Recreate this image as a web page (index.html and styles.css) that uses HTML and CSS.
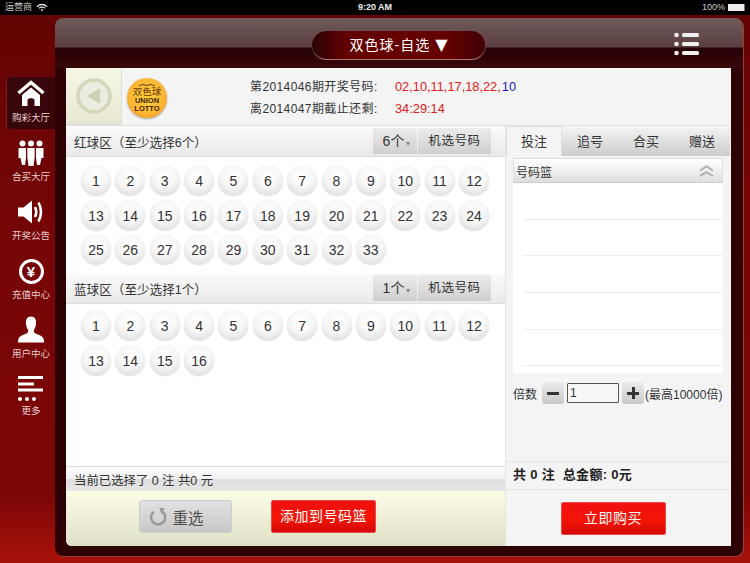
FILE: index.html
```html
<!DOCTYPE html>
<html>
<head>
    <title>双色球-自选</title>
    <link rel="stylesheet" href="styles.css">
</head>
<body>
    <div class="status-bar">
        <div class="status-left">
            <span>运营商</span>
            <svg class="wifi" viewBox="0 0 14 10" width="12" height="9">
                <path d="M1 4 Q7 -1 13 4" fill="none" stroke="#ddd" stroke-width="1.5"/>
                <path d="M3.5 6 Q7 3 10.500 6" fill="none" stroke="#ddd" stroke-width="1.5"/>
                <path d="M5.500 8 L7 6.500 L8.500 8 L7 9.500 Z" fill="#ddd"/>
            </svg>
        </div>
        <div class="status-time">9:20 AM</div>
        <div class="status-right">
            <span>100%</span>
            <span class="battery"></span>
        </div>
    </div>

    <div class="main">
        <div class="sidebar">
            <div class="nav-item active">
                <svg class="nav-icon" viewBox="0 0 28 28" width="28" height="28">
                    <path d="M1.500 13 L14 2.500 L26.500 13" fill="none" stroke="#fff" stroke-width="3.400"/>
                    <path d="M5 15 L14 7.500 L23 15 V26 H17.500 V19.500 Q14 16.500 10.500 19.500 V26 H5 Z" fill="#fff"/>
                </svg>
                <div class="nav-label">购彩大厅</div>
            </div>
            <div class="nav-item">
                <svg class="nav-icon" viewBox="0 0 28 28" width="28" height="28">
                    <circle cx="5.500" cy="4.500" r="3" fill="#fff"/>
                    <circle cx="14" cy="4.500" r="3" fill="#fff"/>
                    <circle cx="22.500" cy="4.500" r="3" fill="#fff"/>
                    <path d="M1.500 9 H9 V19 L8 26 H5 L3.500 19 H1.500 Z" fill="#fff"/>
                    <path d="M10.300 9 H17.700 V18 L16.500 27 H11.500 L10.300 18 Z" fill="#fff"/>
                    <path d="M19 9 H26.500 V19 H24.500 L23 26 H20 L19 19 Z" fill="#fff"/>
                </svg>
                <div class="nav-label">合买大厅</div>
            </div>
            <div class="nav-item">
                <svg class="nav-icon" viewBox="0 0 28 28" width="28" height="28">
                    <path d="M1 9.500 H6.500 L15 2.500 V25.500 L6.500 18.500 H1 Z" fill="#fff"/>
                    <path d="M18 9 Q20.500 14 18 19" fill="none" stroke="#fff" stroke-width="2.600"/>
                    <path d="M21.500 4.500 Q26.500 14 21.500 23.500" fill="none" stroke="#fff" stroke-width="2.600"/>
                </svg>
                <div class="nav-label">开奖公告</div>
            </div>
            <div class="nav-item">
                <div class="nav-icon yen-box"><span class="yen">¥</span></div>
                <div class="nav-label">充值中心</div>
            </div>
            <div class="nav-item">
                <svg class="nav-icon" viewBox="0 0 28 28" width="28" height="28">
                    <path d="M14 0.500 C18 0.500 19.500 3.500 19 8 C18.700 11 17.500 13 16.800 14.500 C16.500 16.500 18 17.500 21 18.500 C24.500 19.800 26.500 21 27 24.500 V26.500 H1 V24.500 C1.500 21 3.500 19.800 7 18.500 C10 17.500 11.500 16.500 11.200 14.500 C10.500 13 9.300 11 9 8 C8.500 3.500 10 0.500 14 0.500 Z" fill="#fff"/>
                </svg>
                <div class="nav-label">用户中心</div>
            </div>
            <div class="nav-item">
                <svg class="nav-icon" viewBox="0 0 28 28" width="28" height="28">
                    <rect x="1" y="1" width="25" height="3" fill="#fff"/>
                    <rect x="1" y="7.500" width="16" height="3" fill="#fff"/>
                    <rect x="1" y="13.500" width="25" height="3" fill="#fff"/>
                    <circle cx="3" cy="24" r="2" fill="#fff"/>
                    <circle cx="10" cy="24" r="2" fill="#fff"/>
                    <circle cx="17" cy="24" r="2" fill="#fff"/>
                </svg>
                <div class="nav-label">更多</div>
            </div>
        </div>

        <div class="frame">
            <div class="frame-header">
                <div class="title-pill">双色球-自选 <span class="title-arrow">▼</span></div>
                <svg class="menu-icon" viewBox="0 0 26 24" width="26" height="24">
                    <circle cx="2.500" cy="3" r="2.300" fill="#eee"/>
                    <circle cx="2.500" cy="12" r="2.300" fill="#eee"/>
                    <circle cx="2.500" cy="21" r="2.300" fill="#eee"/>
                    <rect x="8" y="1" width="17" height="4" rx="1.500" fill="#eee"/>
                    <rect x="8" y="10" width="17" height="4" rx="1.500" fill="#eee"/>
                    <rect x="8" y="19" width="17" height="4" rx="1.500" fill="#eee"/>
                </svg>
            </div>

            <div class="panel">
                <div class="info-row">
                    <div class="back-box">
                        <svg viewBox="0 0 36 36" width="36" height="36">
                            <circle cx="18" cy="18" r="16" fill="#ecece0" stroke="#d6d6ba" stroke-width="3.500"/>
                            <path d="M11 18 L24 10 V26 Z" fill="#cfcfb2"/>
                        </svg>
                    </div>
                    <div class="logo">
                        <svg class="logo-mark" viewBox="0 0 16 4" width="16" height="4">
                            <path d="M0 3 Q4 0 8 2.500 Q12 0 16 3" fill="none" stroke="#6a3a05" stroke-width="1"/>
                        </svg>
                        <span class="logo-cn">双色球</span>
                        <span class="logo-en">UNION</span>
                        <span class="logo-en">LOTTO</span>
                    </div>
                    <div class="draw-info">
                        <div class="draw-line">
                            <span class="draw-name">第2014046期开奖号码:</span>
                            <span class="red">02,10,11,17,18,22,<span class="blue">10</span></span>
                        </div>
                        <div class="draw-line">
                            <span class="draw-name">离2014047期截止还剩:</span>
                            <span class="red">34:29:14</span>
                        </div>
                    </div>
                </div>

                <div class="content">
                    <div class="left-col">
                        <div class="zone-header">
                            <span class="zone-title">红球区（至少选择6个）</span>
                            <div class="picker">
                                <div class="picker-count">6个<span class="caret">▾</span></div>
                                <div class="picker-btn">机选号码</div>
                            </div>
                        </div>
                        <div class="balls red-balls" id="redBalls"></div>

                        <div class="zone-header">
                            <span class="zone-title">蓝球区（至少选择1个）</span>
                            <div class="picker">
                                <div class="picker-count">1个<span class="caret">▾</span></div>
                                <div class="picker-btn">机选号码</div>
                            </div>
                        </div>
                        <div class="balls blue-balls" id="blueBalls"></div>

                        <div class="selected-bar">当前已选择了 0 注 共0 元</div>
                        <div class="action-bar">
                            <div class="reset-btn">
                                <svg viewBox="0 0 20 20" width="19" height="19">
                                    <path d="M13.500 4.500 A7.500 7.500 0 1 1 5 5" fill="none" stroke="#999" stroke-width="2.600"/>
                                    <path d="M11 0.500 L16.500 1.500 L13 7 Z" fill="#999"/>
                                </svg>
                                <span>重选</span>
                            </div>
                            <div class="red-btn add-btn">添加到号码篮</div>
                        </div>
                    </div>

                    <div class="right-col">
                        <div class="tabs">
                            <div class="tab active">投注</div>
                            <div class="tab">追号</div>
                            <div class="tab">合买</div>
                            <div class="tab">赠送</div>
                        </div>

                        <div class="basket">
                            <div class="basket-header">
                                <span>号码篮</span>
                                <svg viewBox="0 0 16 14" width="15" height="13">
                                    <path d="M1 6 L8 1.500 L15 6" fill="none" stroke="#b4b4b4" stroke-width="2.400"/>
                                    <path d="M1 12 L8 7.500 L15 12" fill="none" stroke="#b4b4b4" stroke-width="2.400"/>
                                </svg>
                            </div>
                            <div class="basket-rows">
                                <div class="basket-row"></div>
                                <div class="basket-row"></div>
                                <div class="basket-row"></div>
                                <div class="basket-row"></div>
                                <div class="basket-row"></div>
                            </div>
                        </div>

                        <div class="times-row">
                            <span>倍数</span>
                            <div class="step-btn minus-btn"><span class="minus"></span></div>
                            <input class="times-input" type="text" value="1">
                            <div class="step-btn plus-btn"><span class="minus"></span><span class="plus-bar"></span></div>
                            <span>(最高10000倍)</span>
                        </div>

                        <div class="spacer"></div>

                        <div class="summary">共 0 注&nbsp; 总金额: 0元</div>
                        <div class="buy-row">
                            <div class="red-btn buy-btn">立即购买</div>
                        </div>
                    </div>
                </div>
            </div>
        </div>
    </div>

    <script>
        function fillBalls(id, count) {
            const box = document.getElementById(id);
            for (let i = 1; i <= count; i++) {
                const ball = document.createElement('div');
                ball.className = 'ball';
                ball.textContent = i;
                box.appendChild(ball);
            }
        }

        fillBalls('redBalls', 33);
        fillBalls('blueBalls', 16);
    </script>
</body>
</html>
```

FILE: styles.css
```css
* { box-sizing: border-box; }
html, body { margin: 0; padding: 0; }
body {
    width: 750px;
    height: 563px;
    overflow: hidden;
    font-family: "Liberation Sans", "Noto Sans CJK SC", sans-serif;
    font-size: 12px;
    color: #333;
    background: linear-gradient(#620303, #760505 40%, #7c0606 88%, #a5120a 99%);
    display: flex;
    flex-direction: column;
}

/* status bar */
.status-bar {
    height: 15px;
    background: #000;
    color: #ccc;
    font-size: 9px;
    line-height: 15px;
    display: flex;
    padding: 0 5px;
}
.status-left, .status-right { flex: 1; display: flex; align-items: center; gap: 4px; }
.status-right { justify-content: flex-end; gap: 3px; }
.status-time { color: #eee; font-weight: bold; font-size: 9px; }
.battery {
    width: 17px;
    height: 7px;
    background: #eee;
    border-right: 1px solid #777;
}

.main { flex: 1; display: flex; }

/* sidebar */
.sidebar {
    width: 55px;
    padding: 62px 0 0 7px;
    display: flex;
    flex-direction: column;
    gap: 7px;
}
.nav-item {
    height: 52px;
    width: 48px;
    padding-top: 3px;
    display: flex;
    flex-direction: column;
    align-items: center;
    color: #e6d0d0;
}
.nav-item.active {
    background: #38050a;
    border-radius: 4px 0 0 4px;
    box-shadow: -1px 0 1px rgba(255, 255, 255, .12);
}
.nav-icon { width: 28px; height: 28px; display: block; }
.nav-label { margin-top: 3px; font-size: 9.500px; line-height: 13px; white-space: nowrap; }
.nav-item:last-child .nav-label { margin-top: 1px; }
.yen-box { display: flex; align-items: center; justify-content: center; }
.yen {
    width: 25px;
    height: 25px;
    border: 3px solid #fff;
    border-radius: 50%;
    color: #fff;
    font-weight: bold;
    font-size: 15px;
    line-height: 19px;
    text-align: center;
}

/* frame */
.frame {
    width: 688px;
    height: 538px;
    margin-top: 3px;
    background: #2e0204;
    border-radius: 8px;
    box-shadow: 1px 1px 0 #a03a3a;
    padding-bottom: 10px;
    display: flex;
    flex-direction: column;
}
.frame-header {
    height: 50px;
    flex: none;
    position: relative;
    display: flex;
    align-items: center;
    justify-content: center;
    padding-top: 3px;
    border-radius: 8px 8px 0 0;
    background: linear-gradient(#6f5a5a, #5c3f40 58%, #250205 60%, #3a0609);
}
.title-pill {
    width: 174px;
    height: 29px;
    margin-top: 1px;
    border-radius: 15px;
    border-bottom: 1px solid #b07878;
    border-right: 1px solid #7a3a3a;
    background: linear-gradient(90deg, #2a0205, #640000 20%, #640000 80%, #3c0205);
    color: #fff;
    font-size: 14px;
    letter-spacing: 1px;
    line-height: 28px;
    text-align: center;
    white-space: nowrap;
}
.title-arrow { font-family: "DejaVu Sans", sans-serif; font-size: 16px; letter-spacing: 0; }
.menu-icon { position: absolute; right: 43px; top: 14px; }

/* white panel */
.panel {
    flex: 1;
    margin: 0 12px 0 11px;
    background: #f4f4f4;
    border-radius: 0 0 0 6px;
    overflow: hidden;
    display: flex;
    flex-direction: column;
}
.info-row {
    height: 58px;
    flex: none;
    display: flex;
    align-items: center;
    border-bottom: 1px solid #e0e0e0;
}
.back-box {
    width: 56px;
    height: 57px;
    background: linear-gradient(#f6f6e6, #e8e8d2);
    border-right: 1px solid #ddd;
    border-bottom: 1px solid #ddd;
    display: flex;
    align-items: center;
    justify-content: center;
}
.logo {
    width: 40px;
    height: 40px;
    margin: 2px 0 0 5px;
    border-radius: 50%;
    background: radial-gradient(circle at 50% 45%, #ffcf3a, #fab533 60%, #ea8418);
    box-shadow: 0 1px 2px rgba(0, 0, 0, .35);
    color: #6a3a05;
    display: flex;
    flex-direction: column;
    align-items: center;
    justify-content: center;
    overflow: hidden;
}
.logo-mark { display: block; flex: none; }
.logo-cn { font-size: 9.500px; line-height: 10px; }
.logo-en { font-size: 7.500px; line-height: 7.500px; font-weight: bold; color: #3c2205; }
.draw-info { margin-left: 83px; margin-top: 2px; }
.draw-line { display: flex; line-height: 22px; }
.draw-name { width: 145px; font-size: 12px; letter-spacing: .4px; }
.red { color: #e02020; font-size: 12.800px; }
.blue { color: #1a1ac8; margin-left: 1px; }

.content { flex: 1; display: flex; min-height: 0; }

/* left column */
.left-col {
    width: 439px;
    background: #fff;
    display: flex;
    flex-direction: column;
}
.zone-header {
    height: 31px;
    flex: none;
    padding: 0 14px 0 8px;
    display: flex;
    align-items: center;
    justify-content: space-between;
    border-bottom: 1px solid #ddd;
    background: linear-gradient(#fbfbfb, #e9e9e9);
}
.zone-title { font-size: 12.600px; padding-top: 1px; }
.picker { display: flex; height: 26px; line-height: 26px; text-align: center; }
.picker-count, .picker-btn { background: linear-gradient(#ececec, #cfcfcf); }
.picker-count { width: 44px; margin-right: 1px; padding-left: 3px; font-size: 14px; white-space: nowrap; }
.picker-btn { width: 73px; font-size: 12.500px; letter-spacing: .6px; }
.caret { color: #888; font-size: 8px; margin-left: 2px; }

.balls {
    display: grid;
    grid-template-columns: repeat(12, 30px);
    column-gap: 4.360px;
    row-gap: 4.500px;
    padding-left: 15px;
    align-content: start;
}
.red-balls { height: 116px; padding-top: 9px; }
.blue-balls { flex: 1; padding-top: 7px; }
.ball {
    width: 30px;
    height: 30px;
    border-radius: 50%;
    background: radial-gradient(circle at 50% 32%, #fff, #f7f7f7 45%, #d4d4d4 100%);
    box-shadow: 0 0 1px rgba(0, 0, 0, .25);
    font-size: 14px;
    line-height: 30px;
    text-align: center;
    color: #333;
}

.selected-bar {
    height: 25px;
    flex: none;
    padding: 2px 0 0 8px;
    line-height: 25px;
    font-size: 12.400px;
    border-top: 1px solid #ddd;
    background: linear-gradient(#fcfcfc, #f2f2f2 50%, #dfdfdf 52%, #e6e6e6);
}
.action-bar {
    height: 55px;
    flex: none;
    padding: 9px 0 0 73px;
    display: flex;
    align-items: flex-start;
    gap: 39px;
    background: linear-gradient(#fdfde6, #dfdfc6);
}
.reset-btn {
    width: 93px;
    height: 33px;
    padding-right: 18px;
    border: 1px solid #ccc;
    border-radius: 3px;
    background: linear-gradient(#e2e2e2, #c8c8c8);
    color: #4c4c4c;
    font-size: 15.500px;
    display: flex;
    align-items: center;
    justify-content: center;
    gap: 4px;
}
.red-btn {
    height: 33px;
    width: 105px;
    border-radius: 2px;
    border: 1px solid #e84a4a;
    background: linear-gradient(#f01010, #f41505 55%, #d40808);
    color: #fff;
    text-align: center;
    line-height: 31px;
    font-size: 14px;
    letter-spacing: .5px;
}

/* right column */
.right-col {
    width: 226px;
    display: flex;
    flex-direction: column;
    border-left: 1px solid #e4e4e4;
}
.tabs { height: 30px; flex: none; display: flex; }
.tab {
    width: 56px;
    margin-top: 2px;
    font-size: 13px;
    line-height: 27px;
    text-align: center;
    background: linear-gradient(#f2f2f2, #cccccc);
}
.tab.active {
    margin-top: 0;
    line-height: 30px;
    background: #f4f4f4;
    border: 1px solid #ddd;
    border-bottom: none;
    border-radius: 3px 3px 0 0;
}
.basket { margin: 2px 8px 0 7px; height: 215px; flex: none; background: #fff; }
.basket-header {
    height: 25px;
    padding: 2px 8px 0 2px;
    display: flex;
    align-items: center;
    justify-content: space-between;
    background: linear-gradient(#fff, #f2f2f2 45%, #dedede);
    border: 1px solid #ddd;
    border-bottom-color: #ccc;
}
.basket-rows { padding-left: 10px; }
.basket-row { height: 36.700px; border-bottom: 1px solid #eee; }

.times-row {
    margin: 9px 0 0 7px;
    height: 22px;
    flex: none;
    display: flex;
    align-items: center;
    white-space: nowrap;
}
.step-btn {
    width: 22px;
    height: 22px;
    border-radius: 3px;
    background: linear-gradient(#ececec, #c8c8c8);
    position: relative;
    flex: none;
}
.minus-btn { margin: 0 3px 0 5px; }
.plus-btn { margin: 0 1px 0 3px; }
.minus, .plus-bar { position: absolute; background: #333; }
.minus { left: 5px; top: 9.500px; width: 12px; height: 3px; }
.plus-bar { left: 9.500px; top: 5px; width: 3px; height: 12px; }
.times-input {
    width: 52px;
    height: 20px;
    margin: 0;
    padding: 0 2px;
    border: 1px solid #555;
    border-radius: 1px;
    background: #f8f8f8;
    font-family: inherit;
    font-size: 12px;
    color: #333;
}

.spacer { flex: 1; }
.summary {
    height: 29px;
    flex: none;
    padding-left: 7px;
    line-height: 26px;
    font-size: 13px;
    font-weight: bold;
    letter-spacing: .3px;
    color: #222;
    border-top: 1px solid #e4e4e4;
    border-bottom: 1px solid #e4e4e4;
}
.buy-row {
    height: 56px;
    flex: none;
    display: flex;
    justify-content: center;
    padding: 12px 11px 0 0;
}
```
